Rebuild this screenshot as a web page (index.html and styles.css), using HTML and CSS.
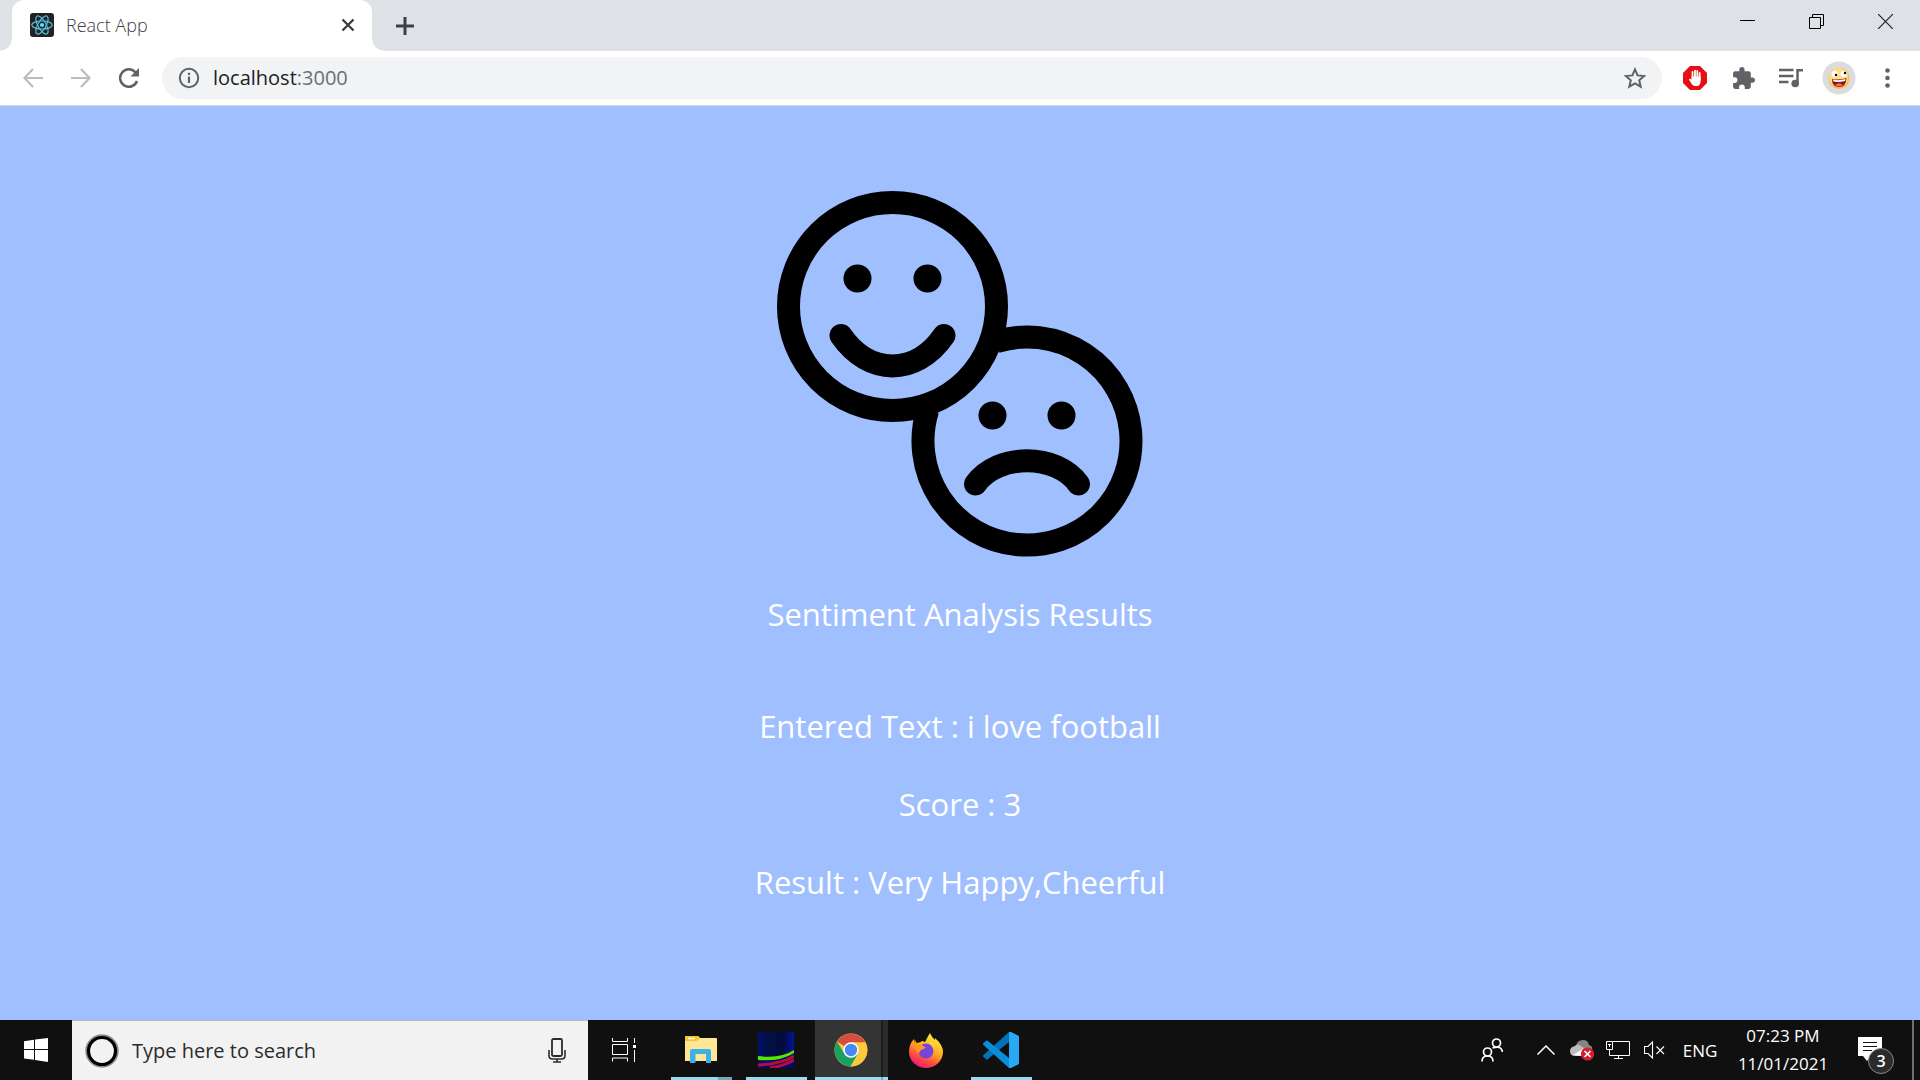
FILE: index.html
```html
<!DOCTYPE html>
<html lang="en">
<head>
<meta charset="utf-8">
<title>React App</title>
<link rel="stylesheet" href="styles.css">
</head>
<body>
<header class="browser">
  <div class="tab-strip">
    <div class="tab">
      <svg class="favicon" width="24" height="24" viewBox="0 0 24 24" aria-hidden="true">
        <rect width="24" height="24" rx="3" fill="#222"/>
        <g fill="none" stroke="#53c1de" stroke-width="1.2">
          <ellipse cx="12" cy="12" rx="10.2" ry="4"/>
          <ellipse cx="12" cy="12" rx="10.2" ry="4" transform="rotate(60 12 12)"/>
          <ellipse cx="12" cy="12" rx="10.2" ry="4" transform="rotate(120 12 12)"/>
        </g>
        <circle cx="12" cy="12" r="2.1" fill="#61dafb"/>
      </svg>
      <span class="tab-title">React App</span>
      <button class="icon-button tab-close" aria-label="Close tab">
        <svg width="14" height="14" viewBox="0 0 14 14"><path d="M1.5 1.5l11 11M12.500 1.500l-11 11" stroke="#3c4043" stroke-width="2.4"/></svg>
      </button>
    </div>
    <button class="icon-button new-tab" aria-label="New tab">
      <svg width="18" height="18" viewBox="0 0 18 18"><path d="M9 0v18M0 9h18" stroke="#3c4043" stroke-width="3"/></svg>
    </button>
    <div class="window-controls">
      <button class="icon-button" aria-label="Minimize"><svg width="15" height="15" viewBox="0 0 15 15"><path d="M0 6.500h15" stroke="#000"/></svg></button>
      <button class="icon-button" aria-label="Restore"><svg width="15" height="15" viewBox="0 0 15 15"><path d="M.5 3.500h11v11H.5zM3.500 3.500v-3h11v11h-3" fill="none" stroke="#000"/></svg></button>
      <button class="icon-button" aria-label="Close"><svg width="15" height="15" viewBox="0 0 15 15"><path d="M0 0l15 15M15 0L0 15" stroke="#222" stroke-width="1.200"/></svg></button>
    </div>
  </div>
  <div class="toolbar">
    <button class="icon-button nav" aria-label="Back"><svg width="20" height="20" viewBox="0 0 20 20"><path d="M20 10H1.500M10 1L1.500 10l8.500 9" fill="none" stroke="#babcbe" stroke-width="2.200"/></svg></button>
    <button class="icon-button nav" aria-label="Forward"><svg width="20" height="20" viewBox="0 0 20 20"><path d="M0 10h18.500M10 1l8.500 9-8.500 9" fill="none" stroke="#babcbe" stroke-width="2.200"/></svg></button>
    <button class="icon-button nav" aria-label="Reload"><svg width="22" height="20" viewBox="0 0 22 20"><path d="M17.500 4.500A8.700 8.700 0 1 0 19 13" fill="none" stroke="#5f6368" stroke-width="2.500"/><path d="M21 0v8.500h-8.500z" fill="#5f6368"/></svg></button>
    <div class="omnibox">
      <svg width="22" height="22" viewBox="0 0 22 22" aria-hidden="true"><circle cx="11" cy="11" r="9.200" fill="none" stroke="#5f6368" stroke-width="2"/><path d="M11 9.500v6.500M11 5.800v2.200" stroke="#5f6368" stroke-width="2.200"/></svg>
      <a class="address" href="http://localhost:3000"><span class="host">localhost</span>:3000</a>
      <button class="icon-button" aria-label="Bookmark this page"><svg width="22" height="22" viewBox="0 0 22 22"><path d="M11 2.400l2.600 6 6.500.6-4.900 4.300 1.500 6.400-5.700-3.400-5.700 3.400 1.500-6.400L1.900 9l6.500-.6z" fill="none" stroke="#5f6368" stroke-width="2"/></svg></button>
    </div>
    <div class="extensions">
      <button class="icon-button" aria-label="Ad blocker"><svg width="24" height="24" viewBox="0 0 24 24"><path d="M7 0h10l7 7v10l-7 7H7l-7-7V7z" fill="#e60f14"/><path d="M9.500 6v7M12 4.600V12M14.300 5v7M16.700 7v7" stroke="#fff" stroke-width="1.800" stroke-linecap="round"/><path d="M8.600 10.500h9v4.500c0 3-1.500 5-3.500 5h-2c-2 0-3-1.400-4-3l-2.200-3.500c.2-1.200 1.700-1 2.700.5z" fill="#fff"/></svg></button>
      <button class="icon-button" aria-label="Extensions"><svg width="25" height="25" viewBox="0 0 24 24"><path d="M20.500 11H19V7a2 2 0 0 0-2-2h-4V3.500a2.500 2.500 0 0 0-5 0V5H4a2 2 0 0 0-2 2v3.800h1.500a2.700 2.700 0 0 1 0 5.400H2V20a2 2 0 0 0 2 2h3.800v-1.500a2.700 2.700 0 0 1 5.400 0V22H17a2 2 0 0 0 2-2v-4h1.500a2.500 2.500 0 0 0 0-5z" fill="#5f6368"/></svg></button>
      <button class="icon-button" aria-label="Media"><svg width="24" height="20" viewBox="0 0 24 20"><path d="M0 2h14.500M0 8h14.500M0 14h9.500M18.500 15V2.200H24" fill="none" stroke="#5f6368" stroke-width="2.500"/><circle cx="16.200" cy="15.500" r="3.800" fill="#5f6368"/></svg></button>
      <button class="icon-button" aria-label="Profile"><svg width="34" height="34" viewBox="0 0 34 34"><circle cx="17" cy="17" r="16.500" fill="#dcdcdc"/><circle cx="17" cy="17.500" r="10.500" fill="#f3bd57"/><circle cx="16.500" cy="16.500" r="9.500" fill="#fbdf86"/><circle cx="12.500" cy="13" r="3" fill="#fff"/><circle cx="21.500" cy="13" r="3" fill="#fff"/><circle cx="14" cy="14" r="1.200"/><circle cx="23" cy="12" r="1.200"/><path d="M10 18q7 1.500 14.500-1-.5 9-7.500 9t-7-8z" fill="#8c1018"/><path d="M11 18.600q6.500 1.300 12.500-.6l-.4 2q-6 1.500-11.600.6z" fill="#fff"/><path d="M13 24q4-3.500 8 0-4 2.500-8 0z" fill="#f26a6a"/></svg></button>
      <button class="icon-button" aria-label="Menu"><svg width="5" height="20" viewBox="0 0 5 20"><g fill="#5f6368"><circle cx="2.500" cy="2.500" r="2.300"/><circle cx="2.500" cy="10" r="2.300"/><circle cx="2.500" cy="17.500" r="2.300"/></g></svg></button>
    </div>
  </div>
</header>

<main class="page">
  <svg class="faces" viewBox="0 0 366 366" role="img" aria-label="Happy and sad faces">
    <g fill="none" stroke="#000" stroke-width="23" stroke-linecap="round">
      <circle cx="115.500" cy="115.500" r="104"/>
      <path d="M219 150.700A104 104 0 1 1 150.700 219" stroke-linecap="butt"/>
      <path d="M64 144.500C92 185 139 185 167 144.500M198.500 293C221 262 279 262 301.500 293"/>
    </g>
    <circle cx="80.500" cy="87.500" r="14"/>
    <circle cx="150.500" cy="87.500" r="14"/>
    <circle cx="215.500" cy="224.500" r="14"/>
    <circle cx="284.500" cy="224.500" r="14"/>
  </svg>
  <h1 class="heading">Sentiment Analysis Results</h1>
  <div class="results">
    <p>Entered Text : i love football</p>
    <p>Score : 3</p>
    <p>Result : Very Happy,Cheerful</p>
  </div>
</main>

<footer class="taskbar">
  <button class="icon-button start" aria-label="Start"><svg width="24" height="24" viewBox="0 0 24 24"><path d="M0 3.200L10 1.800V11H0zM11 1.600L24 0v11H11zM0 12h10v9.800L0 20.500zM11 12h13v12l-13-2z" fill="#fff"/></svg></button>
  <div class="search">
    <svg width="34" height="34" viewBox="0 0 34 34" aria-hidden="true"><circle cx="17" cy="17" r="15.500" fill="none" stroke="#8c8c8c" stroke-width="2.500"/><circle cx="17" cy="17" r="13.500" fill="none" stroke="#000" stroke-width="3.200"/></svg>
    <input class="search-input" type="text" placeholder="Type here to search" aria-label="Search">
    <button class="icon-button" aria-label="Voice search"><svg width="18" height="25" viewBox="0 0 18 25"><rect x="4" y="1" width="10" height="17" rx="1.500" fill="none" stroke="#2b2b2b" stroke-width="1.800"/><path d="M1 12v5.500q0 3.500 3.500 3.500h9q3.500 0 3.500-3.500V12M9 21v3M5 24h8" fill="none" stroke="#2b2b2b" stroke-width="1.600"/></svg></button>
  </div>
  <nav class="apps" aria-label="Apps">
    <button class="icon-button app task-view" aria-label="Task view"><svg width="24" height="24" viewBox="0 0 24 24"><path d="M.5 0v3.500h15V0M.5 6.500h15v10H.5zM.5 23.500V20h15v3.500M22.500 0v5M22.500 12v12" fill="none" stroke="#fff"/><path d="M21 7h3v3h-3z" fill="#fff"/></svg></button>
    <button class="icon-button app open grouped" aria-label="File Explorer"><svg width="32" height="28" viewBox="0 0 32 28"><path d="M0 1q0-1 1-1h12l2 2h16q1 0 1 1v22H0z" fill="#ffe694"/><path d="M0 5V1q0-1 1-1h12l2 2-3 3z" fill="#f8c32c"/><path d="M3 2.500h7" stroke="#fff" stroke-width="1.400"/><path d="M5 27V15q0-2 2-2h17q2 0 2 2v12h-5v-9H10.500v9z" fill="#39b2e9"/></svg></button>
    <button class="icon-button app open" aria-label="Light trails"><svg width="36" height="36" viewBox="0 0 36 36"><defs><linearGradient id="night" x2="1"><stop stop-color="#020f70"/><stop offset=".25" stop-color="#021048"/><stop offset=".7" stop-color="#010c38"/><stop offset="1" stop-color="#0414a0"/></linearGradient></defs><path d="M0 0h36v36H0z" fill="url(#night)"/><path d="M0 28q25 2 36-8v16H0z" fill="#040a70"/><path d="M0 33q24-1 36-9M12 36q14-2 24-8" fill="none" stroke="#b50d3c" stroke-width="3"/><path d="M0 24q22 3 36-6v3Q22 30 0 28z" fill="#55e800"/></svg></button>
    <button class="icon-button app open active" aria-label="Chrome"><svg width="34" height="34" viewBox="0 0 34 34"><circle cx="17" cy="17" r="16.500" fill="#fcc93d"/><path d="M17 17L3 8.500A16.500 16.500 0 0 1 31.500 9.500H17z" fill="#d64c40"/><path d="M3 8.500A16.500 16.500 0 0 0 16.500 33.500L24 21 17 17 10 20z" fill="#16a261"/><path d="M24 21l-7.500 12.500A16.500 16.500 0 0 0 31.500 9.500H17z" fill="#fcc93d"/><circle cx="17" cy="17" r="7.700" fill="#fff"/><circle cx="17" cy="17" r="6.200" fill="#4688f4"/></svg></button>
    <button class="icon-button app" aria-label="Firefox"><svg width="34" height="35" viewBox="0 0 34 35"><defs><linearGradient id="flame" x1=".8" y1="0" x2=".3" y2="1"><stop stop-color="#fff04a"/><stop offset=".45" stop-color="#ffb020"/><stop offset=".75" stop-color="#ff4b3e"/><stop offset="1" stop-color="#e81680"/></linearGradient></defs><path d="M21 0q2 5 5 7 0-1 0-2 8 7 8 14a17 16 0 0 1-34 0Q0 11 5 6l1 4q3 0 6-1 0-2 4 0 3-6 5-9z" fill="url(#flame)"/><circle cx="17" cy="18" r="7.500" fill="#7544d8"/><path d="M6 7l2 4 5 1q1 2 4 2-1 2-5 3-2 4-3 3-4-3-3-13z" fill="#ff9623"/><path d="M20 10q5 2 4 7 3-5-1-9z" fill="#ffd23a"/></svg></button>
    <button class="icon-button app open" aria-label="Visual Studio Code"><svg width="36" height="36" viewBox="0 0 36 36"><path d="M26 0v10L5 27q-1 1-2 0L.5 25q-1-1 0-2z" fill="#0073b7"/><path d="M.5 13q-1-1 0-2L3 9q1-1 2 0l21 17v10z" fill="#0a8edb"/><path d="M26 0q1-.4 2 0l7 3.500q1 .6 1 1.500v26q0 1-1 1.500L28 36q-1 .4-2 0z" fill="#29a8f3"/></svg></button>
  </nav>
  <div class="tray">
    <button class="icon-button people" aria-label="People"><svg width="22" height="24" viewBox="0 0 22 24"><g fill="none" stroke="#fff" stroke-width="1.700"><circle cx="15.500" cy="5" r="4"/><circle cx="6.500" cy="14" r="4"/><path d="M1 23.500q0-5.500 5.500-5.500t5.500 5.500M11.500 10q9-3 10 4"/></g></svg></button>
    <button class="icon-button chevron" aria-label="Show hidden icons"><svg width="18" height="10" viewBox="0 0 18 10"><path d="M.5 9.500L9 1l8.500 8.500" fill="none" stroke="#fff" stroke-width="1.500"/></svg></button>
    <button class="icon-button" aria-label="OneDrive"><svg width="24" height="22" viewBox="0 0 24 22"><path d="M6 7q1-6 7-6 5 0 6 5 4 1 3 5l-10 3z" fill="#858585"/><path d="M5 17q-5 0-5-5 0-4 5-5 2-3 6 0l7 5v5z" fill="#bdbdbd"/><path d="M3 16l10-6v7z" fill="#fff"/><circle cx="17.500" cy="15" r="6.600" fill="#d61c2d"/><path d="M14.500 12l6 6M20.500 12l-6 6" stroke="#fff" stroke-width="1.700"/></svg></button>
    <button class="icon-button" aria-label="Network"><svg width="24" height="19" viewBox="0 0 24 19"><path d="M7 .5h16.500v14H3.500V9M.5.500h6v8h-6zM2 3.500h3M3.500 3v3M8 17.500h9M12.500 15v3" fill="none" stroke="#fff"/></svg></button>
    <button class="icon-button" aria-label="Volume muted"><svg width="21" height="18" viewBox="0 0 21 18"><path d="M.5 5.500H4L8.500 1v16L4 12.500H.5zM12.500 5.500l7.500 7.500M20 5.500L12.500 13" fill="none" stroke="#fff" stroke-width="1.100"/></svg></button>
    <button class="icon-button language">ENG</button>
    <button class="icon-button clock"><time>07:23 PM</time><time>11/01/2021</time></button>
    <button class="icon-button notifications" aria-label="3 notifications">
      <svg width="24" height="26" viewBox="0 0 24 26"><path d="M0 0h24v19H13l-4 5-4-5H0z" fill="#fff"/><path d="M5 5.500h14M5 9.500h14M5 13.500h9" stroke="#111"/></svg>
      <span class="badge">3</span>
    </button>
    <button class="icon-button show-desktop" aria-label="Show desktop"></button>
  </div>
</footer>
</body>
</html>
```
FILE: styles.css
```css
* {
  box-sizing: border-box;
}

body {
  margin: 0;
  min-height: 100vh;
  display: flex;
  flex-direction: column;
  font-family: "Open Sans", "Noto Sans", sans-serif;
}

svg {
  display: block;
  flex: none;
}

.icon-button {
  display: flex;
  align-items: center;
  justify-content: center;
  padding: 0;
  border: 0;
  background: none;
  color: inherit;
  font: inherit;
}

/* Browser frame */
.browser {
  border-bottom: 1px solid #d4d6d9;
  background: #fff;
}

.tab-strip {
  display: flex;
  height: 51px;
  padding-left: 12px;
  background: #dee1e6;
}

.tab {
  position: relative;
  display: flex;
  align-items: center;
  width: 360px;
  padding: 0 17px 2px 18px;
  border-radius: 12px 12px 0 0;
  background: #fff;
}

.tab::before,
.tab::after {
  content: "";
  position: absolute;
  bottom: 0;
  width: 12px;
  height: 12px;
}

.tab::before {
  right: 100%;
  background: radial-gradient(circle at 0 0, #dee1e6 11px, #fff 12px);
}

.tab::after {
  left: 100%;
  background: radial-gradient(circle at 100% 0, #dee1e6 11px, #fff 12px);
}

.tab-title {
  flex: 1;
  margin-left: 12px;
  color: #3c4043;
  font-size: 18px;
  font-weight: 300;
  line-height: 24px;
}

.new-tab {
  width: 66px;
}

.window-controls {
  display: flex;
  height: 42px;
  margin-left: auto;
}

.window-controls .icon-button {
  width: 69px;
}

.toolbar {
  display: flex;
  align-items: center;
  height: 54px;
  padding-left: 9px;
}

.nav {
  width: 48px;
}

.omnibox {
  display: flex;
  flex: 1;
  align-items: center;
  height: 42px;
  margin-left: 9px;
  padding: 0 16px;
  border-radius: 21px;
  background: #f1f3f4;
}

.address {
  flex: 1;
  margin-left: 13px;
  color: #6b6f73;
  font-size: 20px;
  line-height: 26px;
  text-decoration: none;
}

.host {
  color: #202124;
}

.extensions {
  display: flex;
  padding: 0 9px;
}

.extensions .icon-button {
  width: 48px;
}

/* Results page */
.page {
  display: flex;
  flex: 1;
  flex-direction: column;
  align-items: center;
  padding: 85px 16px 48px;
  background: #a0bfff;
  color: #fff;
  font-size: 31px;
  line-height: 46px;
  text-align: center;
}

.faces {
  width: 366px;
  max-width: 100%;
}

.heading {
  margin: 34px 0 66px;
  font-size: inherit;
  font-weight: 400;
}

.results {
  display: flex;
  flex-direction: column;
  gap: 32px;
}

.results p {
  margin: 0;
}

/* Taskbar */
.taskbar {
  display: flex;
  height: 60px;
  background: #101010;
  color: #fff;
}

.start {
  width: 72px;
}

.search {
  display: flex;
  align-items: center;
  width: 516px;
  padding: 0 22px 0 13px;
  border-top: 1px solid #b8b8b8;
  background: #f2f2f2;
}

.search-input {
  flex: 1;
  min-width: 0;
  height: 40px;
  padding: 0 13px;
  border: 0;
  background: none;
  font: 20px "Open Sans", "Noto Sans", sans-serif;
}

.search-input::placeholder {
  color: #2b2b2b;
  opacity: 1;
}

.apps {
  display: flex;
}

.app {
  position: relative;
  width: 75px;
}

.task-view {
  padding-right: 4px;
}

.app.open::after {
  content: "";
  position: absolute;
  bottom: 0;
  left: 8px;
  width: 61px;
  height: 3px;
  background: #9adcec;
}

.app.grouped::after {
  background: linear-gradient(90deg, #9adcec 47px, #76aab5 47px);
}

.app.active {
  background: linear-gradient(90deg, #101010 2px, #343434 2px, #343434 68px, #1c1c1c 68px, #1c1c1c 70px, #2b2b2b 70px);
}

.app.active::after {
  left: 2px;
  width: 73px;
  background: linear-gradient(90deg, #9adcec 66px, #76aab5 66px, #76aab5 68px, #9adcec 68px);
}

.tray {
  display: flex;
  margin-left: auto;
}

.tray .icon-button {
  min-width: 36px;
}

.tray .people {
  width: 72px;
}

.language {
  width: 56px;
  font-size: 17px;
}

.tray .clock {
  flex-direction: column;
  width: 110px;
  font-size: 17px;
  line-height: 28px;
}

.tray .notifications {
  position: relative;
  width: 74px;
  padding-right: 10px;
}

.badge {
  position: absolute;
  top: 28px;
  left: 30px;
  width: 26px;
  height: 26px;
  border: 1px solid #8a8a8a;
  border-radius: 50%;
  background: #2b2b2b;
  font-size: 16px;
  font-weight: 600;
  line-height: 24px;
}

.tray .show-desktop {
  width: 8px;
  min-width: 8px;
  border-left: 2px solid #6e6e6e;
}
```
